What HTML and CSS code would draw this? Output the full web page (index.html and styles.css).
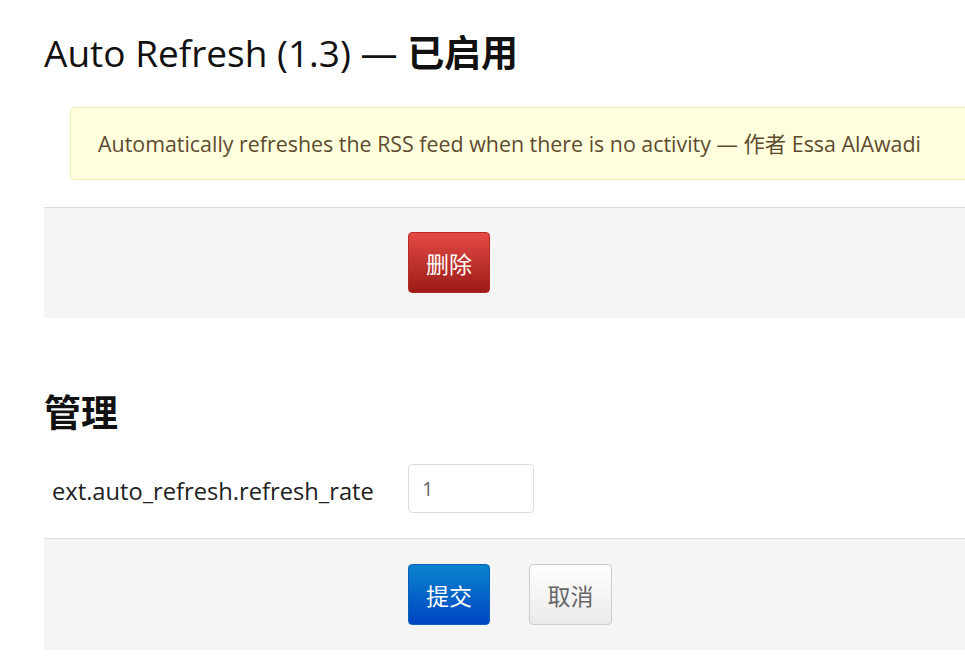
FILE: index.html
```html
<!DOCTYPE html>
<html lang="zh-CN">
<head>
  <meta charset="UTF-8" />
  <title>Auto Refresh</title>
  <link rel="stylesheet" href="styles.css">
</head>
<body>
  <main class="content">
    <h1>Auto Refresh (1.3) — <b>已启用</b></h1>

    <p class="alert">Automatically refreshes the RSS feed when there is no activity — 作者 Essa AlAwadi</p>

    <div class="form-actions">
      <button class="btn btn-danger">删除</button>
    </div>

    <h2>管理</h2>

    <div class="form-group">
      <label for="refresh_rate">ext.auto_refresh.refresh_rate</label>
      <input type="text" id="refresh_rate" value="1" />
    </div>

    <div class="form-actions">
      <button class="btn btn-primary">提交</button>
      <button class="btn btn-cancel">取消</button>
    </div>
  </main>
</body>
</html>
```

FILE: styles.css
```css
html, body {
  margin: 0;
  padding: 0;
  overflow: hidden;
  background-color: #fff;
  color: #222;
  font-family: "Open Sans", "Noto Sans CJK SC", sans-serif;
}

.content {
  width: 1000px;
  margin-left: 44px;
}

h1 {
  margin: 26px 0 0;
  font-size: 37px;
  line-height: 54px;
  font-weight: 400;
  color: #111;
}
h1 b { font-weight: 700; }

.alert {
  margin: 27px 0 0 26px;
  padding: 21px 27px 20px;
  font-size: 21.4px;
  line-height: 30px;
  color: #5e4b2f;
  background-color: #ffffdd;
  border: 1px solid #eeeeb8;
  border-radius: 5px;
}

.form-actions {
  margin-top: 27px;
  padding: 24px 0 25px 364px;
  background-color: #f5f5f5;
  border-top: 1px solid #ddd;
  display: flex;
  gap: 39px;
}

h2 {
  margin: 68px 0 0;
  font-size: 37px;
  line-height: 54px;
  font-weight: 700;
  color: #111;
}

.form-group {
  margin-top: 24px;
  display: flex;
  align-items: center;
}

.form-group label {
  width: 356px;
  padding-left: 8px;
  padding-top: 4px;
  font-size: 23.7px;
  color: #222;
}

.form-group input {
  box-sizing: border-box;
  width: 126px;
  height: 49px;
  padding: 0 13px;
  font-size: 20px;
  font-family: "Open Sans", sans-serif;
  color: #666;
  background-color: #fff;
  border: 1px solid #ddd;
  border-radius: 4px;
}

.form-group + .form-actions { margin-top: 25px; padding-top: 25px; }

.btn {
  box-sizing: border-box;
  height: 61px;
  padding: 0 17px;
  font-size: 23px;
  font-family: "Open Sans", "Noto Sans CJK SC", sans-serif;
  border-radius: 4px;
  cursor: pointer;
}

.btn-danger {
  width: 82px;
  color: #fff;
  background: linear-gradient(to bottom, #e54a44, #9b1b17);
  border: 1px solid #b52a24;
}

.btn-primary {
  width: 82px;
  color: #fff;
  background: linear-gradient(to bottom, #0a84cc, #0045c2);
  border: 1px solid #0a5fb8;
}

.btn-cancel {
  width: 83px;
  color: #666;
  background: linear-gradient(to bottom, #ffffff, #eaeaea);
  border: 1px solid #ccc;
}
```
